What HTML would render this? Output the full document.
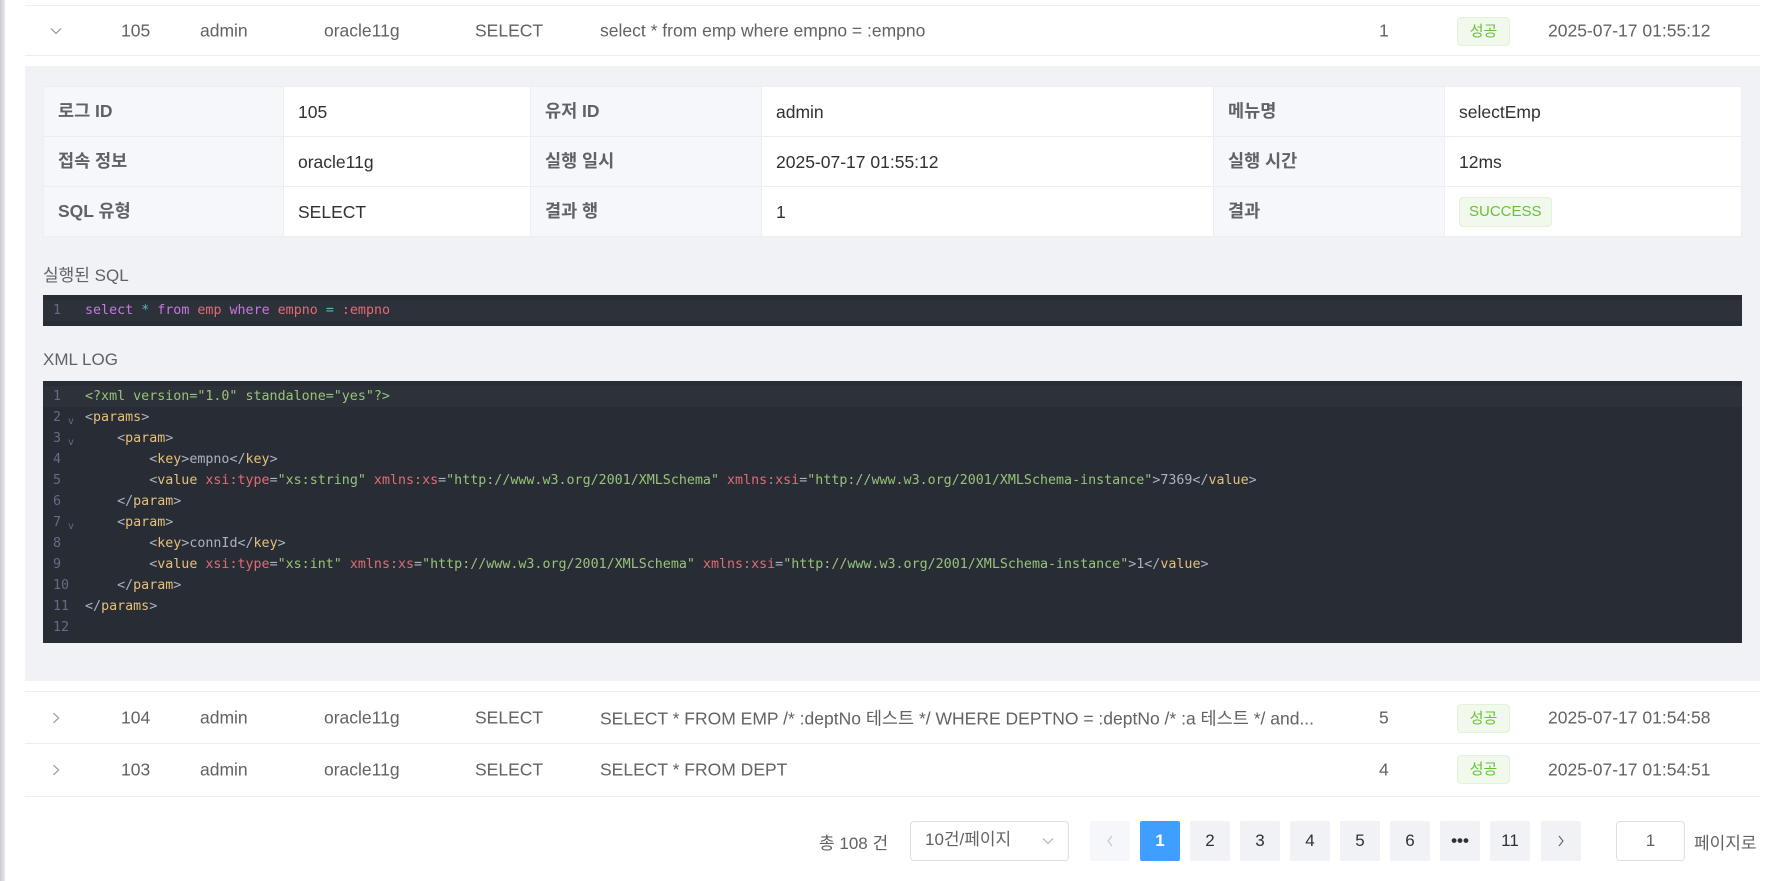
<!DOCTYPE html>
<html><head><meta charset="utf-8"><style>
*{box-sizing:border-box;margin:0;padding:0}
body{width:1781px;height:881px;background:#fff;font-family:"Liberation Sans","Noto Sans CJK KR",sans-serif;color:#606266;position:relative;overflow:hidden}
.abs{position:absolute}
.edge{left:0;top:0;width:5px;height:881px;background:linear-gradient(90deg,#c8cacf,#e8e9ec)}
.row{position:absolute;left:25px;width:1735px;height:51px;border-bottom:1px solid #ebeef5;font-size:17.5px;color:#606266}
.row span{position:absolute;top:50%;transform:translateY(-50%);white-space:nowrap}
.row svg{position:absolute;top:50%;transform:translateY(-50%)}
.badge{position:absolute;width:53px;height:29px;top:11px;background:#f0f9eb;border:1px solid #e1f3d8;border-radius:4px;color:#67c23a;font-size:15px;text-align:center;line-height:27px}
.panel{left:25px;top:66px;width:1735px;height:615px;background:#f0f2f5}
table{position:absolute;left:43px;top:86px;width:1699px;border-collapse:collapse;font-size:17.5px;table-layout:fixed}
td{height:50px;border:1px solid #ebeef5;padding:0 14px;background:#fff;color:#303133;line-height:20px;vertical-align:middle}
td.l{background:#f5f7fa;color:#606266;font-weight:bold;padding-bottom:2px}
.h{font-size:17px;color:#606266}
.code{left:43px;width:1699px;background:#282c34;font-family:"DejaVu Sans Mono","Liberation Mono",monospace;font-size:13.33px;color:#abb2bf}
.ln{position:absolute;height:21px;line-height:21px;left:0;width:1699px;white-space:pre}
.ln i{font-style:normal;position:absolute;left:10px;width:26px;text-align:left;color:#636d83}
.ln b{font-weight:normal;position:absolute;left:25px;color:#636d83;font-size:10px;top:4px}
.ln em{font-style:normal;position:absolute;left:42px}
.t{color:#e5c07b}.a{color:#e06c75}.s{color:#98c379}.p{color:#c678dd}.c{color:#56b6c2}.r{color:#e06c75}
.pg{position:absolute;top:821px;width:40px;height:40px;background:#f0f2f5;border-radius:2px;text-align:center;line-height:40px;font-size:17px;color:#303133}
</style></head><body>
<div class="abs edge"></div>
<div class="row" style="top:5px;border-top:1px solid #ebeef5;height:51px">
<svg style="left:25px" width="12" height="8" viewBox="0 0 12 8"><path d="M1 1.5L6 6.5L11 1.5" fill="none" stroke="#909399" stroke-width="1.1"/></svg>
<span style="left:96px">105</span><span style="left:175px">admin</span><span style="left:299px">oracle11g</span><span style="left:450px">SELECT</span><span style="left:575px">select * from emp where empno = :empno</span><span style="left:1354px">1</span>
<div class="badge" style="left:1432px">성공</div><span style="left:1523px">2025-07-17 01:55:12</span></div>
<div class="abs panel"></div>
<table>
<colgroup><col style="width:240px"><col style="width:247px"><col style="width:231px"><col style="width:452px"><col style="width:231px"><col></colgroup>
<tr><td class="l">로그 ID</td><td>105</td><td class="l">유저 ID</td><td>admin</td><td class="l">메뉴명</td><td>selectEmp</td></tr>
<tr><td class="l">접속 정보</td><td>oracle11g</td><td class="l">실행 일시</td><td>2025-07-17 01:55:12</td><td class="l">실행 시간</td><td>12ms</td></tr>
<tr><td class="l">SQL 유형</td><td>SELECT</td><td class="l">결과 행</td><td>1</td><td class="l">결과</td><td><span style="display:inline-block;background:#f0f9eb;border:1px solid #e1f3d8;border-radius:4px;color:#67c23a;font-size:15px;padding:0 9px;line-height:28px">SUCCESS</span></td></tr>
</table>
<div class="abs h" style="left:43px;top:261px">실행된 SQL</div>
<div class="abs code" style="top:295px;height:31px">
<div class="ln" style="top:5px;background:#2c313a"><i>1</i><em><span class="p">select</span> <span class="c">*</span> <span class="p">from</span> <span class="r">emp</span> <span class="p">where</span> <span class="r">empno</span> <span class="c">=</span> <span class="r">:empno</span></em></div>
</div>
<div class="abs h" style="left:43px;top:350px">XML LOG</div>
<div class="abs code" style="top:381px;height:262px">
<div class="ln" style="top:5px;background:#2c313a"><i>1</i><em class="s">&lt;?xml version="1.0" standalone="yes"?&gt;</em></div>
<div class="ln" style="top:26px"><i>2</i><b>v</b><em>&lt;<span class="t">params</span>&gt;</em></div>
<div class="ln" style="top:47px"><i>3</i><b>v</b><em>    &lt;<span class="t">param</span>&gt;</em></div>
<div class="ln" style="top:68px"><i>4</i><em>        &lt;<span class="t">key</span>&gt;empno&lt;/<span class="t">key</span>&gt;</em></div>
<div class="ln" style="top:89px"><i>5</i><em>        &lt;<span class="t">value</span> <span class="a">xsi:type</span>=<span class="s">"xs:string"</span> <span class="a">xmlns:xs</span>=<span class="s">"http://www.w3.org/2001/XMLSchema"</span> <span class="a">xmlns:xsi</span>=<span class="s">"http://www.w3.org/2001/XMLSchema-instance"</span>&gt;7369&lt;/<span class="t">value</span>&gt;</em></div>
<div class="ln" style="top:110px"><i>6</i><em>    &lt;/<span class="t">param</span>&gt;</em></div>
<div class="ln" style="top:131px"><i>7</i><b>v</b><em>    &lt;<span class="t">param</span>&gt;</em></div>
<div class="ln" style="top:152px"><i>8</i><em>        &lt;<span class="t">key</span>&gt;connId&lt;/<span class="t">key</span>&gt;</em></div>
<div class="ln" style="top:173px"><i>9</i><em>        &lt;<span class="t">value</span> <span class="a">xsi:type</span>=<span class="s">"xs:int"</span> <span class="a">xmlns:xs</span>=<span class="s">"http://www.w3.org/2001/XMLSchema"</span> <span class="a">xmlns:xsi</span>=<span class="s">"http://www.w3.org/2001/XMLSchema-instance"</span>&gt;1&lt;/<span class="t">value</span>&gt;</em></div>
<div class="ln" style="top:194px"><i>10</i><em>    &lt;/<span class="t">param</span>&gt;</em></div>
<div class="ln" style="top:215px"><i>11</i><em>&lt;/<span class="t">params</span>&gt;</em></div>
<div class="ln" style="top:236px"><i>12</i></div>
</div>
<div class="row" style="top:691px;border-top:1px solid #ebeef5;height:53px">
<svg style="left:27px" width="8" height="12" viewBox="0 0 8 12"><path d="M1.5 1L6.5 6L1.5 11" fill="none" stroke="#909399" stroke-width="1.1"/></svg>
<span style="left:96px">104</span><span style="left:175px">admin</span><span style="left:299px">oracle11g</span><span style="left:450px">SELECT</span><span style="left:575px">SELECT * FROM EMP /* :deptNo 테스트 */ WHERE DEPTNO = :deptNo /* :a 테스트 */ and...</span><span style="left:1354px">5</span>
<div class="badge" style="left:1432px;top:12px">성공</div><span style="left:1523px">2025-07-17 01:54:58</span></div>
<div class="row" style="top:744px;height:53px">
<svg style="left:27px" width="8" height="12" viewBox="0 0 8 12"><path d="M1.5 1L6.5 6L1.5 11" fill="none" stroke="#909399" stroke-width="1.1"/></svg>
<span style="left:96px">103</span><span style="left:175px">admin</span><span style="left:299px">oracle11g</span><span style="left:450px">SELECT</span><span style="left:575px">SELECT * FROM DEPT</span><span style="left:1354px">4</span>
<div class="badge" style="left:1432px">성공</div><span style="left:1523px">2025-07-17 01:54:51</span></div>
<div class="abs" style="left:819px;top:829px;font-size:17px;color:#606266">총 108 건</div>
<div class="abs" style="left:910px;top:821px;width:159px;height:40px;border:1px solid #dcdfe6;border-radius:4px;font-size:17px;color:#606266;line-height:36px;padding-left:14px">10건/페이지<svg style="position:absolute;right:14px;top:15px" width="12" height="8" viewBox="0 0 12 8"><path d="M1 1.5L6 6.5L11 1.5" fill="none" stroke="#a8abb2" stroke-width="1.1"/></svg></div>
<div class="pg" style="left:1090px;background:#f5f7fa"><svg style="margin-top:14px" width="8" height="12" viewBox="0 0 8 12"><path d="M6 1L2 6L6 11" fill="none" stroke="#c0c4cc" stroke-width="1.1"/></svg></div>
<div class="pg" style="left:1140px;background:#409eff;color:#fff;font-weight:bold">1</div>
<div class="pg" style="left:1190px">2</div><div class="pg" style="left:1240px">3</div><div class="pg" style="left:1290px">4</div><div class="pg" style="left:1340px">5</div><div class="pg" style="left:1390px">6</div>
<div class="pg" style="left:1440px;font-weight:bold">•••</div><div class="pg" style="left:1490px">11</div>
<div class="pg" style="left:1541px"><svg style="margin-top:14px" width="8" height="12" viewBox="0 0 8 12"><path d="M2 1L6 6L2 11" fill="none" stroke="#606266" stroke-width="1.1"/></svg></div>
<div class="abs" style="left:1616px;top:821px;width:69px;height:40px;border:1px solid #dcdfe6;border-radius:4px;text-align:center;line-height:38px;font-size:17px;color:#606266">1</div>
<div class="abs" style="left:1694px;top:829px;font-size:17px;color:#606266">페이지로</div>
</body></html>
